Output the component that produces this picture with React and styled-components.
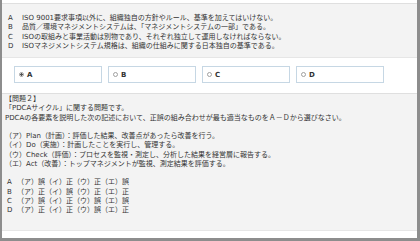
import React from 'react'
import styled, { createGlobalStyle } from 'styled-components'

const GlobalStyle = createGlobalStyle`
	html, body {
		margin: 0;
		padding: 0;
		background: #ffffff;
	}

	body {
		font-family: 'DejaVu Sans', 'Noto Sans CJK JP', sans-serif;
		color: #333333;
	}
`

const choicesA = [
	['A', 'ISO 9001要求事項以外に、組織独自の方針やルール、基準を加えてはいけない。'],
	['B', '品質／環境マネジメントシステムは、「マネジメントシステムの一部」である。'],
	['C', 'ISOの取組みと事業活動は別物であり、それぞれ独立して運用しなければならない。'],
	['D', 'ISOマネジメントシステム規格は、組織の仕組みに関する日本独自の基準である。'],
]

const steps = [
	'（ア）Plan（計画）：評価した結果、改善点があったら改善を行う。',
	'（イ）Do（実施）：計画したことを実行し、管理する。',
	'（ウ）Check（評価）：プロセスを監視・測定し、分析した結果を経営層に報告する。',
	'（エ）Act（改善）：トップマネジメントが監視、測定結果を評価する。',
]

const answers = [
	['A', '（ア）誤（イ）正（ウ）正（エ）誤'],
	['B', '（ア）正（イ）誤（ウ）正（エ）正'],
	['C', '（ア）誤（イ）正（ウ）誤（エ）誤'],
	['D', '（ア）正（イ）正（ウ）誤（エ）正'],
]

const App = () => (
	<>
		<GlobalStyle />
		<Frame>
			<Panel $top={10} $bottom={6}>
				{choicesA.map(([key, text]) => (
					<ChoiceRow key={key} $label={14}>
						<span>{key}</span>
						<span>{text}</span>
					</ChoiceRow>
				))}
			</Panel>

			<OptionsRow>
				{['A', 'B', 'C', 'D'].map(key => (
					<OptionBox key={key}>
						<Radio $checked={key === 'A'} />
						<OptionLabel>{key}</OptionLabel>
					</OptionBox>
				))}
			</OptionsRow>

			<Panel $top={1} $bottom={15} $left={3}>
				<Block>
					<Line>【問題２】</Line>
					<Line>「PDCAサイクル」に関する問題です。</Line>
					<Line>PDCAの各要素を説明した次の記述において、正誤の組み合わせが最も適当なものをＡ－Ｄから選びなさい。</Line>
				</Block>
				<Block>
					{steps.map(step => (
						<Line key={step}>{step}</Line>
					))}
				</Block>
				<AnswerList>
					{answers.map(([key, text]) => (
						<ChoiceRow key={key} $label={10}>
							<span>{key}</span>
							<span>{text}</span>
						</ChoiceRow>
					))}
				</AnswerList>
			</Panel>
		</Frame>
	</>
)

const Frame = styled.div`
	box-sizing: border-box;
	width: 420px;
	height: 241px;
	padding: 3px 0 7px;
	border-left: 2px solid #8d8d8d;
	border-right: 3px solid #8d8d8d;
	border-bottom: 3px solid #8d8d8d;
	display: flex;
	flex-direction: column;
	overflow: hidden;
`

const Panel = styled.section`
	background: #f3f3f3;
	border-top: 1px solid #dfdfdf;
	border-bottom: 1px solid #e6e6e6;
	padding: ${p => p.$top}px 6px ${p => p.$bottom}px ${p => p.$left ?? 6}px;
	font-size: 7px;
	line-height: 9.25px;
	white-space: nowrap;
	flex: ${p => (p.$left ? 1 : 'none')};
`

const ChoiceRow = styled.div`
	display: grid;
	grid-template-columns: ${p => p.$label}px 1fr;
`

const Block = styled.div`
	margin-bottom: 9.25px;
`

const Line = styled.div``

const AnswerList = styled.div`
	padding-left: 2px;
`

const OptionsRow = styled.div`
	display: flex;
	gap: 6px;
	padding: 8px 0 10px 12px;
`

const OptionBox = styled.div`
	box-sizing: border-box;
	width: 88px;
	height: 17px;
	border: 1px solid #c6d7e4;
	background: #ffffff;
	display: flex;
	align-items: center;
	gap: 3px;
	padding-left: 4px;
`

const Radio = styled.span`
	box-sizing: border-box;
	width: 5px;
	height: 5px;
	border-radius: 50%;
	border: 1px solid #a0a0a0;
	background: ${p => (p.$checked ? 'radial-gradient(circle, #555 0 1px, #fff 1.2px)' : '#fff')};
`

const OptionLabel = styled.span`
	font-size: 7px;
	font-weight: 700;
	color: #333;
`

export default App
